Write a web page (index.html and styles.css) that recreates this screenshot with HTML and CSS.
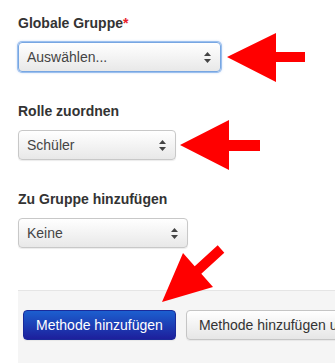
FILE: index.html
```html
<!DOCTYPE html>
<html lang="de">
<head>
  <meta charset="UTF-8">
  <title>Methode hinzufügen</title>
  <link rel="stylesheet" href="styles.css">
</head>
<body>

  <!-- Form fields -->
  <div class="form">
    <div class="group">
      <label>Globale Gruppe<span class="req">*</span></label>
      <div class="select focus w-global">
        <span>Auswählen...</span>
        <svg class="caret" width="7" height="11" viewBox="0 0 7 11"><path d="M3.5 0 L7 4 L0 4 Z M0 7 L7 7 L3.5 11 Z" fill="#444"/></svg>
      </div>
    </div>

    <div class="group">
      <label>Rolle zuordnen</label>
      <div class="select w-role">
        <span>Schüler</span>
        <svg class="caret" width="7" height="11" viewBox="0 0 7 11"><path d="M3.5 0 L7 4 L0 4 Z M0 7 L7 7 L3.5 11 Z" fill="#444"/></svg>
      </div>
    </div>

    <div class="group">
      <label>Zu Gruppe hinzufügen</label>
      <div class="select w-group">
        <span>Keine</span>
        <svg class="caret" width="7" height="11" viewBox="0 0 7 11"><path d="M3.5 0 L7 4 L0 4 Z M0 7 L7 7 L3.5 11 Z" fill="#444"/></svg>
      </div>
    </div>
  </div>

  <!-- Actions -->
  <div class="form-actions">
    <button class="btn btn-primary">Methode hinzufügen</button>
    <button class="btn">Methode hinzufügen und weitere</button>
  </div>

  <!-- red annotation arrows -->
  <svg class="annotations" width="335" height="363" viewBox="0 0 335 363">
    <polygon points="227,57 276,33 276,52 305,52 305,62 276,62 276,82" fill="#ff0000"/>
    <polygon points="180,145 229,120 229,140 260,140 260,151 229,151 229,170" fill="#ff0000"/>
    <polygon points="162,302 183,253 194.7,266.3 217.7,245.3 224.3,252.7 201.3,273.7 213,287" fill="#ff0000"/>
  </svg>

</body>
</html>
```

FILE: styles.css
```css
/* reset & basic */
* { box-sizing: border-box; margin: 0; padding: 0; }
body {
  font-family: "Liberation Sans", Arial, sans-serif;
  font-size: 14px;
  color: #333;
  background: #fff;
  overflow: hidden;
  position: relative;
  width: 335px;
  height: 363px;
}

/* form fields */
.form {
  padding: 13px 0 0 18px;
}
.group {
  margin-bottom: 29px;
}
.group label {
  display: block;
  font-weight: bold;
  line-height: 20px;
  margin-bottom: 9px;
}
.req { color: #e8202a; }

.select {
  display: flex;
  align-items: center;
  height: 30px;
  padding: 0 9px 0 8px;
  border: 1px solid #c8c8c8;
  border-radius: 4px;
  background: linear-gradient(#ffffff, #e8e8e8);
  color: #444;
  box-shadow: 0 1px 1px rgba(0,0,0,0.08);
}
.select .caret { margin-left: auto; }
.select.focus {
  border-color: #77a6e2;
  box-shadow: 0 0 0 1px #9cc0ee, 0 0 3px rgba(82,140,230,0.6);
}
.w-global { width: 203px; }
.w-role { width: 158px; }
.w-group { width: 170px; }

/* footer bar */
.form-actions {
  margin: 42px 0 0 18px;
  height: 80px;
  padding: 19px 5px;
  background: #f5f5f5;
  border-top: 1px solid #e5e5e5;
  display: flex;
  gap: 10px;
}
.btn {
  flex-shrink: 0;
  height: 30px;
  padding: 0 12px;
  font-family: inherit;
  font-size: 14px;
  line-height: 28px;
  color: #333;
  white-space: nowrap;
  border: 1px solid #c5c5c5;
  border-radius: 4px;
  background: linear-gradient(#ffffff, #e6e6e6);
  box-shadow: 0 1px 1px rgba(0,0,0,0.06);
}
.btn-primary {
  color: #fff;
  border-color: #1a2a9a;
  background: linear-gradient(#1c5fcf, #1d1f9c);
}

/* arrows drawn over the form */
.annotations {
  position: absolute;
  top: 0;
  left: 0;
  pointer-events: none;
}
```
